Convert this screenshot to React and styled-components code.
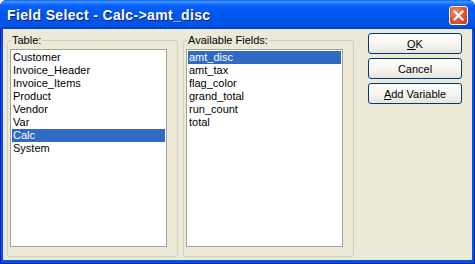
import React from 'react';
import styled, { createGlobalStyle } from 'styled-components';

const GlobalStyle = createGlobalStyle`
  html, body {
    margin: 0;
    padding: 0;
    background: #ffffff;
  }
  body {
    font-family: 'Liberation Sans', Arial, sans-serif;
    font-size: 11px;
  }
`;

const tables = ['Customer', 'Invoice_Header', 'Invoice_Items', 'Product', 'Vendor', 'Var', 'Calc', 'System'];
const fields = ['amt_disc', 'amt_tax', 'flag_color', 'grand_total', 'run_count', 'total'];

function App() {
  return (
    <>
      <GlobalStyle />
      <Window>
        <TitleBar>
          <Title>Field Select - Calc-&gt;amt_disc</Title>
          <CloseButton aria-label="Close">
            <svg width="11" height="11" viewBox="0 0 11 11">
              <path d="M1.5 1.5 L9.5 9.5 M9.5 1.5 L1.5 9.5" stroke="#fff" strokeWidth="2.2" strokeLinecap="square" />
            </svg>
          </CloseButton>
        </TitleBar>
        <Client>
          <Group>
            <Legend>Table:</Legend>
            <ListBox>
              {tables.map(t => (
                <Item key={t} $selected={t === 'Calc'}>{t}</Item>
              ))}
            </ListBox>
          </Group>
          <Group>
            <Legend>Available Fields:</Legend>
            <ListBox>
              {fields.map(f => (
                <Item key={f} $selected={f === 'amt_disc'}>{f}</Item>
              ))}
            </ListBox>
          </Group>
          <Buttons>
            <Button><u>O</u>K</Button>
            <Button>Cancel</Button>
            <Button><u>A</u>dd Variable</Button>
          </Buttons>
        </Client>
      </Window>
    </>
  );
}

export default App;

const Window = styled.div`
  width: 475px;
  height: 264px;
  box-sizing: border-box;
  display: flex;
  flex-direction: column;
  background: #0055e5;
  border-radius: 7px 7px 0 0;
  overflow: hidden;
  padding: 0 3px 4px 3px;
  box-shadow: inset 1px 0 0 #0019cf, inset -1px 0 0 #001ea0, inset 0 -1px 0 #001ea0;
`;

const TitleBar = styled.div`
  height: 29px;
  margin: 0 -3px;
  padding: 0 7px 0 7px;
  display: flex;
  align-items: center;
  justify-content: space-between;
  background: linear-gradient(
    to bottom,
    #0a5ff0 0%,
    #3d95ff 6%,
    #0b61ff 18%,
    #0058ee 40%,
    #0055e8 80%,
    #0050dd 92%,
    #0040c0 100%
  );
`;

const Title = styled.span`
  color: #ffffff;
  font-family: 'Liberation Sans', Arial, sans-serif;
  font-weight: bold;
  font-size: 14px;
  letter-spacing: 0.35px;
  text-shadow: 1px 1px 0 #0a1e8c;
  padding-top: 1px;
`;

const CloseButton = styled.div`
  width: 19px;
  height: 19px;
  box-sizing: border-box;
  border: 1px solid #ffffff;
  border-radius: 3px;
  background: radial-gradient(circle at 35% 30%, #f08a6a 0%, #e45a34 45%, #c8391a 100%);
  display: flex;
  align-items: center;
  justify-content: center;
  margin-top: 1px;
`;

const Client = styled.div`
  flex: 1;
  background: #ece9d8;
  display: flex;
  align-items: flex-start;
  padding: 5px 0 3px 4px;
`;

const Group = styled.fieldset`
  margin: 0 5px 0 0;
  width: 171px;
  height: 223px;
  box-sizing: border-box;
  border: 1px solid #d0d0bf;
  border-radius: 3px;
  padding: 0 10px 9px 2px;
  display: flex;
  flex-direction: column;
`;

const Legend = styled.legend`
  padding: 0 1px;
  margin-left: 1px;
  font-size: 11px;
  line-height: 13px;
  color: #000000;
`;

const ListBox = styled.div`
  flex: 1;
  margin-top: 2px;
  background: #ffffff;
  border: 1px solid #a5a28f;
  padding: 1px;
  display: flex;
  flex-direction: column;
`;

const Item = styled.div`
  height: 13px;
  line-height: 13px;
  padding-left: 1px;
  font-size: 11px;
  color: ${p => (p.$selected ? '#ffffff' : '#000000')};
  background: ${p => (p.$selected ? '#316ac5' : 'transparent')};
  white-space: nowrap;
`;

const Buttons = styled.div`
  margin-left: 9px;
  margin-top: -1px;
  display: flex;
  flex-direction: column;
  gap: 4px;
`;

const Button = styled.div`
  width: 94px;
  height: 21px;
  box-sizing: border-box;
  border: 1px solid #003c74;
  border-radius: 3px;
  background: linear-gradient(to bottom, #ffffff 0%, #f4f3ee 60%, #e6e4dc 100%);
  display: flex;
  align-items: center;
  justify-content: center;
  font-size: 11px;
  color: #000000;

  u {
    text-decoration: underline;
  }
`;
